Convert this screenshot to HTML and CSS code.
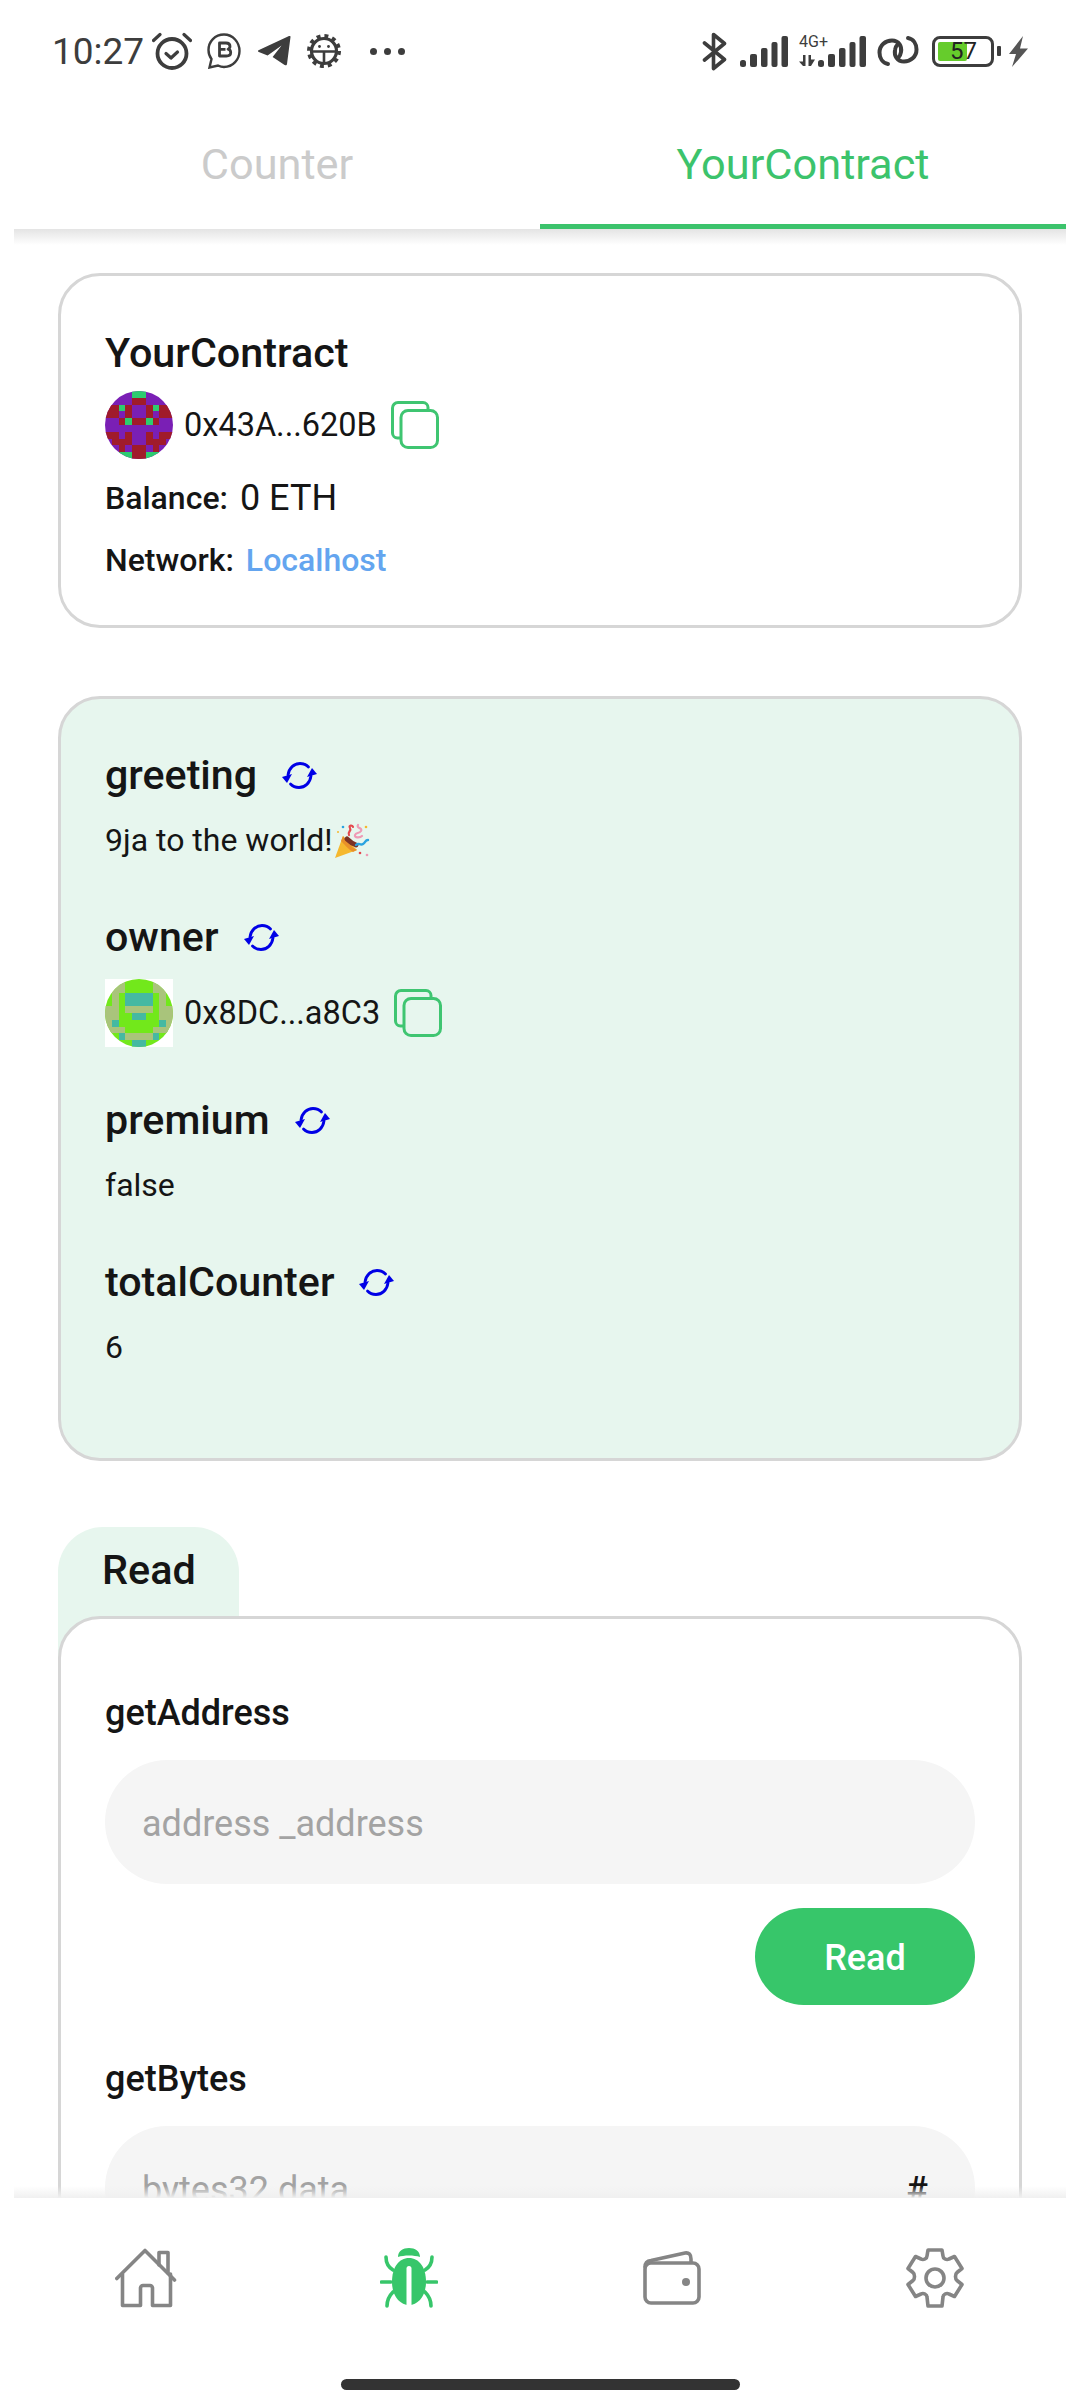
FILE: index.html
```html
<!DOCTYPE html>
<html lang="en">
<head>
  <meta charset="UTF-8" />
  <meta name="viewport" content="width=device-width, initial-scale=1.0" />
  <title>YourContract</title>
  <link rel="stylesheet" href="styles.css">
</head>
<body>

  <svg class="defs">
    <defs>
      <g id="refresh" fill="none" stroke="#0000e6" stroke-width="2.8" stroke-linecap="round">
        <path d="M6 13C7 6 12 1.500 18 1.500c3.500 0 6.500 1.300 8.500 3.500" />
        <path d="M29 14C28 21 23 25.500 17 25.500c-3.500 0-6.500-1.300-8.500-3.500" />
        <path d="M0 15l10-3-5 9z" fill="#0000e6" stroke="none" />
        <path d="M35 12l-10 3 5-9z" fill="#0000e6" stroke="none" />
      </g>
      <g id="copy" fill="none" stroke="#3fc571" stroke-width="3">
        <path d="M37 8V6.500A5 5 0 0 0 32 1.500H7A5.500 5.500 0 0 0 1.500 7v25A5 5 0 0 0 6.500 37H9" />
        <rect x="10" y="9.500" width="36.500" height="37" rx="7" />
      </g>
    </defs>
  </svg>

  <header class="status">
    <div class="status-left">
      <span class="time">10:27</span>
      <svg class="ic-alarm" width="40" height="38" viewBox="0 0 40 38" fill="none" stroke="#3d3d3d" stroke-width="3.2" stroke-linecap="round" stroke-linejoin="round">
        <circle cx="20" cy="21.5" r="14.5" stroke-width="3.8" />
        <path d="M14 21.500l5 4.500 6.500-6" />
        <path d="M1.500 8.500L8 2.500M38.500 8.500L32 2.500" />
      </svg>
      <svg class="ic-b" width="34" height="36" viewBox="0 0 34 36" fill="none" stroke="#3d3d3d">
        <path d="M17 1.500C8 1.500 1.500 8.500 1.500 17c0 3.500 1 6.500 3 9l-2 8.500 8.500-2c2 1 4 1.500 6 1.500 9 0 15.500-7.500 15.500-16S26 1.500 17 1.500z" stroke-width="2.4" />
        <path d="M12.500 10h6.500c2.500 0 4 1.300 4 3.300 0 1.400-.8 2.400-2 2.900 1.700.4 2.700 1.600 2.700 3.300 0 2.300-1.700 3.500-4.400 3.500h-6.800zM12.500 16.300h6" stroke-width="2.8" stroke-linejoin="round" />
      </svg>
      <svg class="ic-plane" width="34" height="30" viewBox="0 0 34 30" fill="#3d3d3d">
        <path d="M33.500 1L30 28c-.2 1.500-1.300 1.600-2.400.9l-12-7.800 9-11.600-14 10-8.800-3.400C.5 15.500.6 14.500 2 14L31.500.2c1.300-.5 2.200-.2 2 .8z" />
      </svg>
      <svg class="ic-bug-gear" width="34" height="36" viewBox="0 0 34 36" fill="none" stroke="#3d3d3d">
        <circle cx="17" cy="18" r="12.5" stroke-width="3.2" />
        <circle cx="17" cy="18" r="15" stroke-width="4" stroke-dasharray="3.9 3.95" />
        <path d="M5 18.500h24M17 18.500V30" stroke-width="2.6" />
        <circle cx="12.500" cy="13.500" r="1.4" fill="#3d3d3d" stroke="none" />
        <circle cx="21.500" cy="13.500" r="1.4" fill="#3d3d3d" stroke="none" />
      </svg>
      <div class="dots"><i></i><i></i><i></i></div>
    </div>
    <div class="status-right">
      <svg class="ic-bt" width="25" height="39" viewBox="0 0 25 39" fill="none" stroke="#3d3d3d" stroke-width="3.6" stroke-linejoin="round" stroke-linecap="round">
        <path d="M2.500 11l20 16.500L11.500 36.500V2.500l11 9L2.500 28" />
      </svg>
      <svg class="ic-bars1" width="48" height="31" viewBox="0 0 48 31" fill="#3d3d3d">
        <rect x="0" y="24" width="6" height="7" rx="2.5" />
        <rect x="10" y="18" width="7" height="13" rx="2" />
        <rect x="21" y="12" width="6.5" height="19" rx="2" />
        <rect x="31.500" y="6" width="6" height="25" rx="2" />
        <rect x="41.500" y="0" width="6.5" height="31" rx="2" />
      </svg>
      <div class="net">
        <span class="net-label">4G+</span>
        <svg class="net-arrows" width="16" height="11" viewBox="0 0 16 11" fill="#3d3d3d">
          <path d="M4 0h2.500v11H4L0 6.500h4zM9.500 0H12v4.500h4L12 11H9.500z" />
        </svg>
      </div>
      <svg class="ic-bars2" width="48" height="31" viewBox="0 0 48 31" fill="#3d3d3d">
        <rect x="0" y="24" width="6" height="7" rx="2.5" />
        <rect x="10" y="18" width="7" height="13" rx="2" />
        <rect x="21" y="12" width="6.5" height="19" rx="2" />
        <rect x="31.500" y="6" width="6" height="25" rx="2" />
        <rect x="41.500" y="0" width="6.5" height="31" rx="2" />
      </svg>
      <svg class="ic-link" width="42" height="32" viewBox="0 0 42 32" fill="none" stroke="#3d3d3d" stroke-width="4" stroke-linecap="round">
        <path d="M11 29C5.500 28 2.500 23 2.500 17.500 2.500 10 8.500 5.500 15 5.500c7 0 10 6 9 11.500-.4 2.800-1.600 4.800-3 6.200" />
        <path d="M31 3c5.500 1 8.500 6 8.500 11.500C39.500 22 33.500 26.500 27 26.500c-7 0-10-6-9-11.500.4-2.800 1.600-4.800 3-6.200" />
      </svg>
      <div class="battery-wrap">
        <div class="battery">
          <div class="battery-fill"></div>
          <span class="battery-num">57</span>
        </div>
        <i class="battery-nub"></i>
      </div>
      <svg class="ic-bolt" width="19" height="31" viewBox="0 0 19 31" fill="#555">
        <path d="M14 0L0 18h7L3 31l16-18.500h-8z" />
      </svg>
    </div>
  </header>

  <nav class="tabs">
    <div class="tab">Counter</div>
    <div class="tab active">YourContract</div>
  </nav>

  <main class="scroll">

    <section class="card contract-card">
      <h2 class="title">YourContract</h2>
      <div class="address">
        <svg class="avatar" viewBox="0 0 10 10" shape-rendering="crispEdges">
          <rect width="10" height="10" fill="#7a1fb5" />
          <g id="blockie-a">
            <g fill="#a01b2b">
              <rect x="4" y="1" width="1" height="1" />
              <rect x="0" y="2" width="2" height="2" />
              <rect x="3" y="2" width="1" height="2" />
              <rect x="2" y="4" width="1" height="1" />
              <rect x="4" y="4" width="1" height="1" />
              <rect x="0" y="6" width="2" height="1" />
              <rect x="3" y="6" width="1" height="2" />
              <rect x="1" y="7" width="2" height="1" />
              <rect x="2" y="8" width="1" height="1" />
              <rect x="4" y="8" width="1" height="2" />
            </g>
            <g fill="#2dcc70">
              <rect x="4" y="0" width="1" height="1" />
              <rect x="2" y="2" width="1" height="1" />
              <rect x="3" y="4" width="1" height="1" />
              <rect x="2" y="9" width="2" height="1" />
            </g>
          </g>
          <use href="#blockie-a" transform="matrix(-1 0 0 1 10 0)" />
        </svg>
        <span class="addr-text">0x43A...620B</span>
        <svg class="copy" width="48" height="48" viewBox="0 0 48 48"><use href="#copy" /></svg>
      </div>
      <div class="meta">
        <span class="meta-label">Balance:</span>
        <span class="balance">0 ETH</span>
      </div>
      <div class="meta">
        <span class="meta-label">Network:</span>
        <span class="network">Localhost</span>
      </div>
    </section>

    <section class="card card-green">
      <div class="field">
        <div class="field-head">
          <h3>greeting</h3>
          <svg class="refresh" width="35" height="27" viewBox="0 0 35 27"><use href="#refresh" /></svg>
        </div>
        <div class="value">9ja to the world!<span class="emoji">
          <svg width="36" height="36" viewBox="0 0 36 36">
            <path d="M1 35l8-22 14 14z" fill="#f5b82e" />
            <path d="M9 13c4 6 8 11 14 14l-4 2C14 26 10 21 7 18z" fill="#e8912a" />
            <path d="M13 16c3 3 6 5 9 6" fill="none" stroke="#7a3326" stroke-width="5" stroke-linecap="round" />
            <path d="M15 12c-2-3 3-4 1-7s3-3 3-1" fill="none" stroke="#e5484d" stroke-width="2.2" stroke-linecap="round" />
            <path d="M24 2c-2 3 5 3 3 6s-5 1-6 4 5 3 7 1" fill="none" stroke="#ef9ab5" stroke-width="2.2" stroke-linecap="round" />
            <path d="M22 22c3-3 4 1 7-1s2-4 5-4" fill="none" stroke="#2ba3e0" stroke-width="2.4" stroke-linecap="round" />
            <circle cx="9" cy="4" r="1.3" fill="#2ba3e0" />
            <circle cx="4" cy="9" r="1" fill="#f5b82e" />
            <circle cx="32" cy="4" r="1.3" fill="#f5b82e" />
            <circle cx="26" cy="30" r="1.3" fill="#e5484d" />
            <circle cx="33" cy="32" r="1.3" fill="#ef9ab5" />
          </svg>
        </span></div>
      </div>

      <div class="field">
        <div class="field-head">
          <h3>owner</h3>
          <svg class="refresh" width="35" height="27" viewBox="0 0 35 27"><use href="#refresh" /></svg>
        </div>
        <div class="address">
          <svg class="avatar avatar-sq" viewBox="0 0 10 10" shape-rendering="crispEdges">
            <rect width="10" height="10" fill="#fff" />
            <clipPath id="circle-b"><circle cx="5" cy="5" r="5" /></clipPath>
            <g clip-path="url(#circle-b)">
              <g id="blockie-b">
                <rect width="5" height="10" fill="#72e81b" />
                <g fill="#a9c47b">
                  <rect x="1" y="0" width="2" height="2" />
                  <rect x="1" y="2" width="1" height="2" />
                  <rect x="0" y="4" width="2" height="2" />
                  <rect x="3" y="4" width="2" height="1" />
                  <rect x="0" y="6" width="1" height="2" />
                  <rect x="1" y="7" width="2" height="1" />
                  <rect x="3" y="8" width="2" height="1" />
                </g>
                <g fill="#45b9a2">
                  <rect x="3" y="2" width="2" height="2" />
                  <rect x="4" y="5" width="1" height="1" />
                  <rect x="1" y="6" width="1" height="1" />
                  <rect x="2" y="8" width="1" height="1" />
                  <rect x="4" y="9" width="1" height="1" />
                </g>
              </g>
              <use href="#blockie-b" transform="matrix(-1 0 0 1 10 0)" />
            </g>
          </svg>
          <span class="addr-text">0x8DC...a8C3</span>
          <svg class="copy" width="48" height="48" viewBox="0 0 48 48"><use href="#copy" /></svg>
        </div>
      </div>

      <div class="field">
        <div class="field-head">
          <h3>premium</h3>
          <svg class="refresh" width="35" height="27" viewBox="0 0 35 27"><use href="#refresh" /></svg>
        </div>
        <div class="value">false</div>
      </div>

      <div class="field">
        <div class="field-head">
          <h3>totalCounter</h3>
          <svg class="refresh" width="35" height="27" viewBox="0 0 35 27"><use href="#refresh" /></svg>
        </div>
        <div class="value">6</div>
      </div>
    </section>

    <section class="read">
      <div class="read-tab">Read</div>
      <div class="card read-card">
        <div class="method">
          <label>getAddress</label>
          <div class="input"><span>address _address</span></div>
          <button class="btn">Read</button>
        </div>
        <div class="method">
          <label>getBytes</label>
          <div class="input"><span>bytes32 data</span><b>#</b></div>
        </div>
      </div>
    </section>

  </main>

  <footer class="bottom">
    <div class="bottom-nav">
      <div class="nav-item">
        <svg width="62" height="60" viewBox="0 0 62 60" fill="none" stroke="#858585" stroke-width="3.6" stroke-linecap="round" stroke-linejoin="round">
          <path d="M1.800 30.500L30 2.500l29.500 29.500" />
          <path d="M7.500 26v31.500h18V40a2.500 2.500 0 0 1 2.500-2.500h7a2.500 2.500 0 0 1 2.500 2.500v17.500h18V26" />
          <path d="M44 17V4.500h9V25" />
        </svg>
      </div>
      <div class="nav-item">
        <svg width="58" height="60" viewBox="0 0 58 60" fill="#37c66a">
          <path d="M18 9C18 3 23 0 29 0s11 3 11 9c-6-2-16-2-22 0z" />
          <path d="M29 10c-10 0-17 9-17 24 0 14 8 23 17 23s17-9 17-23c0-15-7-24-17-24z" />
          <rect x="26.5" y="18" width="5" height="41" rx="2.5" fill="#fff" />
          <path d="M6 9c0 6 2 10 7 13M52 9c0 6-2 10-7 13M1.500 34H11M47 34h9.500M7 58c0-6 2-10 6-14M51 58c0-6-2-10-6-14" fill="none" stroke="#37c66a" stroke-width="3.6" stroke-linecap="round" />
        </svg>
      </div>
      <div class="nav-item">
        <svg width="58" height="54" viewBox="0 0 58 54" fill="none" stroke="#858585" stroke-width="3.6" stroke-linejoin="round" stroke-linecap="round">
          <rect x="2" y="12" width="54" height="40" rx="6" />
          <path d="M2 16c0-4 2-6 6-6.500L42 2c4-.6 6 1.500 6 6v3" />
          <circle cx="43" cy="31" r="4" fill="#858585" stroke="none" />
        </svg>
      </div>
      <div class="nav-item">
        <svg width="58" height="60" viewBox="0 0 58 60" fill="none" stroke="#858585" stroke-width="3.6" stroke-linejoin="round">
          <path d="M22 2h14l1 6c0 2.500 3.500 4.500 6 3l5.500-2.500L56 20.500l-5 4c-2 1.500-2 6.500 0 8l5 4-7.500 12L43 46c-2.500-1.500-6 .5-6 3l-1 9H22l-1-9c0-2.500-3.500-4.500-6-3l-5.500 2.500L2 36.500l5-4c2-1.500 2-6.500 0-8l-5-4L9.500 8.500 15 11c2.500 1.500 6-.5 6-3z" />
          <circle cx="29" cy="30" r="9" />
        </svg>
      </div>
    </div>
    <div class="home-bar"></div>
  </footer>

</body>
</html>
```

FILE: styles.css
```css
* {
  box-sizing: border-box;
}

html, body {
  margin: 0;
  height: 100%;
}

body {
  width: 1080px;
  height: 2400px;
  overflow: hidden;
  display: flex;
  flex-direction: column;
  background-color: #fff;
  color: #151515;
  font-family: Roboto, "Liberation Sans", sans-serif;
}

.defs {
  width: 0;
  height: 0;
  position: absolute;
}

/* status bar */
.status {
  height: 105px;
  padding: 31px 52px 0 52px;
  display: flex;
  justify-content: space-between;
  align-items: flex-start;
  flex-shrink: 0;
}

.status-left,
.status-right {
  display: flex;
  align-items: center;
  height: 40px;
}

.time {
  font-size: 37px;
  color: #3d3d3d;
  margin-right: 8px;
}

.ic-b {
  margin-left: 15px;
}

.ic-plane {
  margin-left: 16px;
}

.ic-bug-gear {
  margin-left: 16px;
}

.dots {
  display: flex;
  gap: 7px;
  margin-left: 29px;
}

.dots i {
  width: 7px;
  height: 7px;
  border-radius: 50%;
  background-color: #3d3d3d;
}

.status-right {
  gap: 11px;
}

.ic-bars1 {
  margin-left: 2px;
}

.net {
  width: 36px;
  height: 36px;
  display: flex;
  flex-direction: column;
  margin-right: -28px;
}

.net-label {
  font-size: 16px;
  line-height: 18px;
  color: #3d3d3d;
}

.net-arrows {
  margin-top: 4px;
}

.battery-wrap {
  display: flex;
  align-items: center;
  gap: 3px;
  margin-left: 2px;
}

.battery {
  width: 62px;
  height: 31px;
  border: 3.5px solid #3d3d3d;
  border-radius: 8px;
  padding: 3px;
  position: relative;
}

.battery-fill {
  width: 29px;
  height: 100%;
  background-color: #66cc2c;
  border-radius: 2px;
}

.battery-num {
  position: absolute;
  left: 15px;
  top: -2px;
  font-size: 24px;
  line-height: 28px;
  color: #222;
}

.battery-nub {
  width: 4px;
  height: 10px;
  background-color: #3d3d3d;
  border-radius: 1px;
}

.ic-bolt {
  margin-left: -3px;
}

/* top tabs */
.tabs {
  height: 124px;
  margin: 0 14px;
  display: flex;
  flex-shrink: 0;
  background-color: #fff;
  position: relative;
  z-index: 2;
}

.tabs::after {
  content: "";
  position: absolute;
  top: 100%;
  left: 0;
  right: 0;
  height: 16px;
  background: linear-gradient(#e4e4e4, rgba(255, 255, 255, 0));
}

.tab {
  flex: 1;
  padding-top: 32px;
  text-align: center;
  font-size: 43.3px;
  line-height: 56px;
  color: #cbcbcb;
  border-bottom: 5px solid transparent;
}

.tab.active {
  color: #3cc36c;
  border-bottom-color: #3cc36c;
}

/* scrolling content */
.scroll {
  flex: 1;
  min-height: 0;
  overflow: hidden;
  padding: 44px 58px 0;
  display: flex;
  flex-direction: column;
  gap: 68px;
}

.card {
  flex-shrink: 0;
  border: 3px solid #d6d6d6;
  border-radius: 42px;
  background-color: #fff;
}

.contract-card {
  padding: 53px 44px 42px;
}

.title {
  margin: 0 0 14px;
  font-size: 41.3px;
  line-height: 48px;
  font-weight: 500;
}

.address {
  display: flex;
  align-items: center;
  height: 68px;
}

.avatar {
  width: 68px;
  height: 68px;
  border-radius: 50%;
  flex-shrink: 0;
}

.avatar-sq {
  border-radius: 0;
}

.addr-text {
  margin-left: 11px;
  font-size: 32.5px;
  line-height: 46px;
}

.copy {
  margin-left: 14px;
}

.meta {
  display: flex;
  align-items: center;
  gap: 12px;
  height: 46px;
  margin-top: 16px;
}

.meta-label {
  font-size: 32px;
  font-weight: 500;
}

.balance {
  font-size: 36px;
}

.network {
  font-size: 32px;
  font-weight: 500;
  color: #64a5ef;
}

.card-green {
  background-color: #e7f6ee;
  padding: 52px 44px 87px;
  display: flex;
  flex-direction: column;
  gap: 49px;
}

.field {
  display: flex;
  flex-direction: column;
  gap: 18px;
}

.field-head {
  display: flex;
  align-items: center;
  gap: 25px;
  height: 48px;
}

.field-head h3 {
  margin: 0;
  font-size: 41.2px;
  font-weight: 500;
}

.value {
  display: flex;
  align-items: center;
  font-size: 32px;
  line-height: 47px;
}

.emoji {
  display: flex;
  margin-left: 1px;
}

/* read section */
.read {
  flex-shrink: 0;
  display: flex;
  flex-direction: column;
  margin-top: -2px;
}

.read-tab {
  width: 181px;
  height: 130px;
  margin-bottom: -41px;
  padding: 20px 0 0 44px;
  background-color: #e7f6ee;
  border-radius: 45px 45px 0 0;
  font-size: 41.4px;
  line-height: 46px;
  font-weight: 500;
}

.read-card {
  padding: 71px 44px 60px;
  display: flex;
  flex-direction: column;
  gap: 51px;
}

.method {
  display: flex;
  flex-direction: column;
  gap: 24px;
}

.method label {
  font-size: 36px;
  line-height: 46px;
  font-weight: 500;
}

.input {
  height: 124px;
  padding: 4px 37px 0;
  display: flex;
  align-items: center;
  justify-content: space-between;
  background-color: #f5f5f5;
  border-radius: 62px;
  font-size: 36px;
  color: #a3a3a3;
}

.input b {
  margin-right: 10px;
  color: #151515;
  font-weight: 500;
  font-size: 36px;
}

.btn {
  align-self: flex-end;
  width: 220px;
  height: 97px;
  padding-top: 4px;
  border: 0;
  border-radius: 49px;
  background-color: #37c66a;
  color: #fff;
  font-family: inherit;
  font-size: 36px;
  font-weight: 500;
}

/* bottom nav */
.bottom {
  height: 202px;
  flex-shrink: 0;
  margin: 0 14px;
  background-color: #fff;
  position: relative;
  z-index: 2;
  display: flex;
  flex-direction: column;
  align-items: center;
}

.bottom::before {
  content: "";
  position: absolute;
  bottom: 100%;
  left: 0;
  right: 0;
  height: 12px;
  background: linear-gradient(rgba(255, 255, 255, 0), #f0f0f0);
}

.bottom-nav {
  width: 100%;
  height: 160px;
  display: grid;
  grid-template-columns: repeat(4, 1fr);
  align-items: center;
}

.nav-item {
  display: flex;
  justify-content: center;
}

.home-bar {
  width: 399px;
  height: 11px;
  margin-top: 21px;
  border-radius: 6px;
  background-color: #333;
}
```
